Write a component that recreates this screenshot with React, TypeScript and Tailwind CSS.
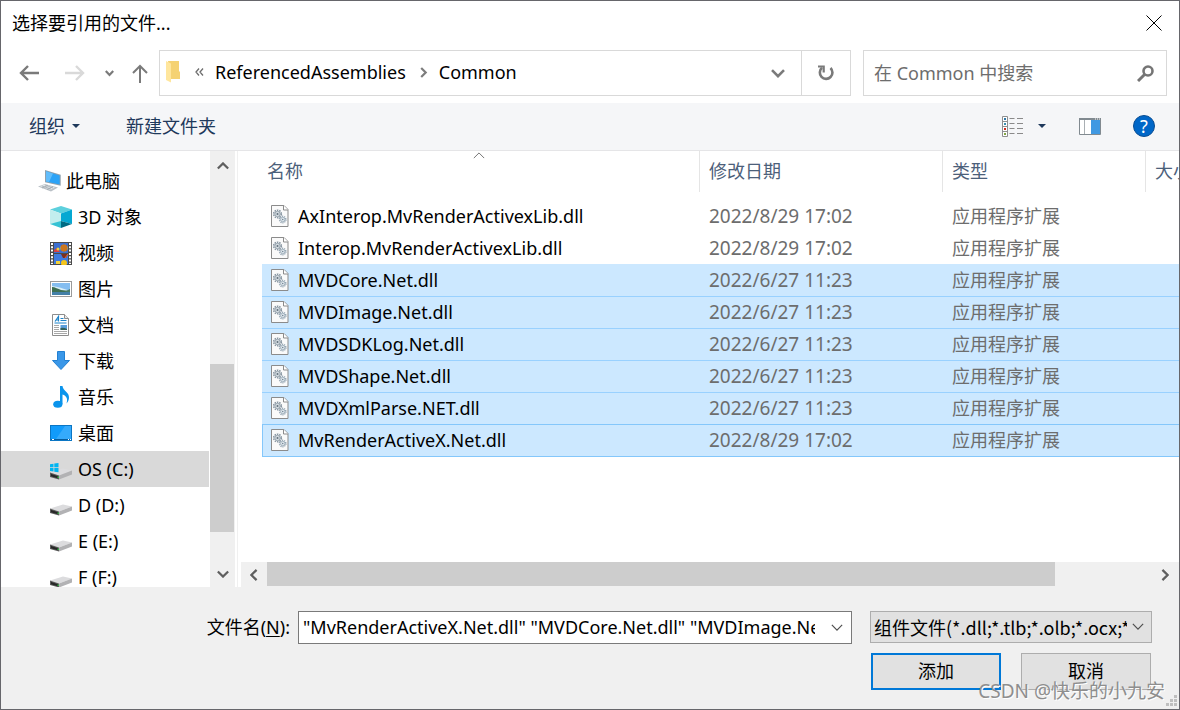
import type { ReactNode } from "react";

type IconProps = { className?: string };

function ComputerIcon() {
  return (
    <svg className="h-6 w-6" viewBox="0 0 24 24">
      <polygon points="0,17.5 7,15 20,18.5 13,22.5" fill="#b9c0c6" />
      <polygon points="2,17.3 7,15.6 17,18.4 12.5,20.8" fill="#e3e7ea" />
      <path d="M4 17l9 3M7 16l8 3M4 19l6-2.5M9 20.5l6-3" stroke="#9aa3aa" strokeWidth="0.7" />
      <polygon points="7,1 22.7,5.7 22.7,16.7 7,13.3" fill="#8fa0ad" />
      <polygon points="8,2.3 21.7,6.5 21.7,15.4 8,12.4" fill="#2ba3f7" />
      <polygon points="8,2.3 15,4.5 11,13 8,12.4" fill="#62bdfb" />
    </svg>
  );
}

function CubeIcon() {
  return (
    <svg className="h-[22px] w-[22px]" viewBox="0 0 22 22">
      <polygon points="0,3.5 11,0 22,3.5 11,7.5" fill="#5dd0dd" />
      <polygon points="0,3.5 11,7.5 11,16 0,18" fill="#c3eeee" />
      <polygon points="0,18 11,15 11,22" fill="#35c2d4" />
      <polygon points="22,3.5 11,7.5 11,15 22,18" fill="#05a8d2" />
      <polygon points="11,15 22,18 11,22" fill="#006c84" />
    </svg>
  );
}

function VideoIcon() {
  return (
    <svg className="h-[23px] w-[22px]" viewBox="0 0 22 23">
      <rect width="22" height="23" fill="#4b4b4b" />
      <rect x="4" y="1" width="14" height="10" fill="#3c6fd0" />
      <rect x="4" y="12" width="14" height="10" fill="#3f7be0" />
      <circle cx="14" cy="6" r="3.6" fill="#efb21d" />
      <path d="M14 2.4v7.2M12 3v6M16 3v6" stroke="#a63b22" />
      <path d="M4 8l3-2 3 4H4z" fill="#d83f45" />
      <circle cx="8" cy="7" r="1.5" fill="#f0d33a" />
      <path d="M11 12h7l-2 4h-3z" fill="#7b3020" />
      <circle cx="14" cy="21" r="3" fill="#f4c51c" />
      <path d="M6 19h4v3H6z" fill="#f4d43b" />
      <path d="M18 12l-3 4" stroke="#ee682c" />
      <path d="M2 1v21M20 1v21" stroke="#fff" strokeWidth="2" strokeDasharray="2 1.3" />
    </svg>
  );
}

function PictureIcon() {
  return (
    <svg className="h-[22px] w-[22px]" viewBox="0 0 22 22">
      <rect x="0.5" y="3.5" width="21" height="15" fill="#fff" stroke="#9b9b9b" />
      <rect x="2" y="5" width="18" height="12" fill="#84bdf0" />
      <path d="M2 8q8 1 18 5v2H2z" fill="#d8edf8" />
      <path d="M2 9c3 0 6 2 9 3l9 1v1H2z" fill="#3d6f52" />
      <path d="M2 14h18v3H2z" fill="#4380a8" />
      <path d="M20 11l-6 3h6z" fill="#477c69" />
    </svg>
  );
}

function DocumentIcon() {
  return (
    <svg className="h-[22px] w-[22px]" viewBox="0 0 22 22">
      <path d="M2.5 0.5h12l4 4v17h-16z" fill="#fff" stroke="#8d8d8d" />
      <path d="M14.5 0.5v4h4" fill="#e8e8e8" stroke="#8d8d8d" />
      <path d="M5 7.5L8.5 2.5v5M6 6h3" stroke="#1c83c9" strokeWidth="1.2" fill="none" />
      <path d="M10.5 4.5h3M10.5 6.5h6M4.5 9h12" stroke="#1c83c9" />
      <path d="M4 11.5h5M4 13.5h5M4 15.5h5M4 17.5h13M4 19.5h13" stroke="#a8a8a8" />
      <rect x="10.5" y="11" width="6.5" height="5" fill="#5a9edb" />
      <path d="M10.5 14q3-1 6.5 1v1h-6.5z" fill="#335f57" />
    </svg>
  );
}

function DownloadIcon() {
  return (
    <svg className="h-[22px] w-[22px]" viewBox="0 0 22 22">
      <path d="M7.5 1.5h7v9h5L11 19.5 2.5 10.5h5z" fill="#3a97e8" stroke="#2280d2" />
    </svg>
  );
}

function MusicIcon() {
  return (
    <svg className="h-[22px] w-[22px]" viewBox="0 0 22 22">
      <ellipse cx="7.8" cy="18.3" rx="4.6" ry="3.5" fill="#0a94ec" />
      <path d="M10 0h2.5c.5 5 7 6 6.5 12-.2 2-1 4-2.5 5.500 1.500-5 0-7.500-4-9V18H10z" fill="#0a94ec" />
    </svg>
  );
}

function DesktopIcon() {
  return (
    <svg className="h-[22px] w-[22px]" viewBox="0 0 22 22">
      <rect x="0.5" y="3.5" width="21" height="15" fill="#119bfb" stroke="#0b76c4" />
      <path d="M15 4h6v13H6z" fill="#35aafc" />
      <path d="M1 17.5h20" stroke="#075c9d" />
      <path d="M2 17.5h2M18 17.5h1M20 17.5h1" stroke="#fff" />
    </svg>
  );
}

function DriveIcon({ system = false }: { system?: boolean }) {
  return (
    <svg className="h-[22px] w-[22px]" viewBox="0 0 22 22">
      <polygon points="0,14.5 13,10.5 22,12.5 9,17.5" fill="#dcdcde" />
      <polygon points="9,17.5 22,12.5 22,16.5 9,21.5" fill="#b2b2b4" />
      <polygon points="0,14.5 9,17.5 9,21.5 0,19" fill="#5b5b5b" />
      <polygon points="1,16 8,18.3 8,20.3 1,18.3" fill="#262626" />
      <rect x="7.5" y="18.5" width="1.5" height="1.5" fill="#38b54a" />
      {system && (
        <path d="M0 6.200l3.500-.5v3.600H0zM4.300 5.600L8.500 5v4.300H4.300zM0 10h3.500v3.600L0 13.100zM4.300 10h4.200v4.200l-4.200-.5z" fill="#00b5f1" />
      )}
    </svg>
  );
}

function DllIcon() {
  return (
    <svg className="h-[22px] w-[18px] shrink-0" viewBox="0 0 18 22">
      <path d="M.5.5h12.500l4 4v17H.5z" fill="#fafafa" stroke="#8b8b8b" />
      <path d="M12.5.5v4.500h4.500" fill="#fff" stroke="#8b8b8b" />
      <circle cx="6.5" cy="9" r="3.8" fill="none" stroke="#8795a1" strokeWidth="1.6" strokeDasharray="1.5 0.9" />
      <circle cx="6.5" cy="9" r="2.7" fill="#d5dce1" stroke="#8795a1" strokeWidth="0.8" />
      <circle cx="6.5" cy="9" r="1" fill="#5f6e7a" />
      <circle cx="11.7" cy="14.5" r="3.2" fill="none" stroke="#93a4b2" strokeWidth="1.4" strokeDasharray="1.2 0.8" />
      <circle cx="11.7" cy="14.5" r="2.2" fill="#e2e9ee" stroke="#93a4b2" strokeWidth="0.8" />
      <circle cx="11.7" cy="14.5" r="0.8" fill="#758898" />
    </svg>
  );
}

function FolderIcon() {
  return (
    <svg className="h-[22px] w-[14px]" viewBox="0 0 14 22">
      <path d="M2 0h11v10.500h1V18H4z" fill="#f5d273" />
      <path d="M0 0l5 2.500V21.500L0 19z" fill="#ffe69d" />
    </svg>
  );
}

function Chevron({ className = "" }: IconProps) {
  return (
    <svg className={className} viewBox="0 0 14 8" fill="none" stroke="currentColor">
      <path d="M1 1l6 6 6-6" />
    </svg>
  );
}

function SmallTriangle() {
  return (
    <svg className="h-1 w-2" viewBox="0 0 8 4">
      <path d="M0 0h8L4 4z" fill="#1e395b" />
    </svg>
  );
}

function DetailsViewIcon() {
  return (
    <svg className="h-[21px] w-[21px]" viewBox="0 0 21 21">
      <path d="M.5.5h5v20h-5zM.5 5.500h5M.5 10.500h5M.5 15.500h5" fill="#fff" stroke="#8f8f8f" />
      <path d="M7.5 2.500h5M15 2.500h6M7.5 7.500h5M15 7.500h6M7.5 12.500h5M15 12.500h6M7.5 17.500h5M15 17.500h6" stroke="#8a8a8a" />
      <path d="M2 2h2v2H2z" fill="#2f79a8" />
      <path d="M2 7h2v2H2z" fill="#3b8fb0" />
      <path d="M2 12h2v2H2z" fill="#d32b1c" />
      <path d="M2 17h2v2H2z" fill="#83a644" />
    </svg>
  );
}

function PreviewPaneIcon() {
  return (
    <svg className="h-[17px] w-[22px]" viewBox="0 0 22 17">
      <path d="M.5.5h21v16H.5z" fill="#fff" stroke="#818a90" />
      <path d="M0 1h22" stroke="#818a90" strokeWidth="2" />
      <path d="M16 1h1M18 1h1M20 1h1" stroke="#fff" />
      <path d="M5.5 2v14" stroke="#a9afb3" />
      <path d="M12 2h9v14h-9z" fill="#4099e2" />
    </svg>
  );
}

const places: { label: string; icon: ReactNode; selected?: boolean }[] = [
  { label: "3D 对象", icon: <CubeIcon /> },
  { label: "视频", icon: <VideoIcon /> },
  { label: "图片", icon: <PictureIcon /> },
  { label: "文档", icon: <DocumentIcon /> },
  { label: "下载", icon: <DownloadIcon /> },
  { label: "音乐", icon: <MusicIcon /> },
  { label: "桌面", icon: <DesktopIcon /> },
  { label: "OS (C:)", icon: <DriveIcon system />, selected: true },
  { label: "D (D:)", icon: <DriveIcon /> },
  { label: "E (E:)", icon: <DriveIcon /> },
  { label: "F (F:)", icon: <DriveIcon /> },
];

const files = [
  { name: "AxInterop.MvRenderActivexLib.dll", date: "2022/8/29 17:02", state: "" },
  { name: "Interop.MvRenderActivexLib.dll", date: "2022/8/29 17:02", state: "" },
  { name: "MVDCore.Net.dll", date: "2022/6/27 11:23", state: "first" },
  { name: "MVDImage.Net.dll", date: "2022/6/27 11:23", state: "selected" },
  { name: "MVDSDKLog.Net.dll", date: "2022/6/27 11:23", state: "selected" },
  { name: "MVDShape.Net.dll", date: "2022/6/27 11:23", state: "selected" },
  { name: "MVDXmlParse.NET.dll", date: "2022/6/27 11:23", state: "selected" },
  { name: "MvRenderActiveX.Net.dll", date: "2022/8/29 17:02", state: "focused" },
];

const rowStyles: Record<string, string> = {
  "": "border-transparent",
  first: "border-[#cce8ff] bg-[#cce8ff]",
  selected: "border-[#99d1ff] bg-[#cce8ff]",
  focused: "border-b border-[#84c7fb] bg-[#cce8ff]",
};

function TitleBar() {
  return (
    <header className="flex h-[49px] shrink-0 items-start justify-between pl-[11px]">
      <h1 className="mt-2 text-[18px] leading-7">选择要引用的文件...</h1>
      <button className="flex h-[43px] w-[50px] items-center justify-center" aria-label="关闭">
        <svg className="h-4 w-4" viewBox="0 0 16 16" stroke="#000" fill="none">
          <path d="M.5.5l15 15M15.5.5l-15 15" />
        </svg>
      </button>
    </header>
  );
}

function NavBar() {
  return (
    <div className="flex h-[46px] shrink-0 items-stretch pr-3">
      <div className="flex w-[158px] shrink-0 items-center text-[#7a7a7a]">
        <button className="ml-[18px]" aria-label="后退">
          <svg className="h-4 w-5" viewBox="0 0 20 16" fill="none" stroke="currentColor" strokeWidth="2.4">
            <path d="M9 1L2 8l7 7M2 8h18" />
          </svg>
        </button>
        <button className="ml-[26px] text-[#d9d9d9]" aria-label="前进" disabled>
          <svg className="h-4 w-5" viewBox="0 0 20 16" fill="none" stroke="currentColor" strokeWidth="2.4">
            <path d="M11 1l7 7-7 7M18 8H0" />
          </svg>
        </button>
        <button className="ml-5" aria-label="最近浏览的位置">
          <svg className="h-[7px] w-[9px]" viewBox="0 0 9 7" fill="none" stroke="currentColor" strokeWidth="2.2">
            <path d="M.8 1l3.700 4L8.200 1" />
          </svg>
        </button>
        <button className="ml-[18px]" aria-label="上移">
          <svg className="h-[19px] w-4" viewBox="0 0 16 19" fill="none" stroke="currentColor" strokeWidth="2">
            <path d="M1 9l7-7 7 7M8 2v17" />
          </svg>
        </button>
      </div>

      <div className="flex min-w-0 flex-1 border border-[#d9d9d9]">
        <nav className="flex min-w-0 flex-1 items-center pb-[2px] pl-[6px]" aria-label="地址">
          <FolderIcon />
          <span className="ml-[15px] text-[#6d6d6d]">
            <svg className="h-2 w-[9px]" viewBox="0 0 9 8" fill="none" stroke="currentColor" strokeWidth="1.3">
              <path d="M4 .5L1 4l3 3.500M8 .5L5 4l3 3.500" />
            </svg>
          </span>
          <button className="ml-[11px] text-[18px] leading-6">ReferencedAssemblies</button>
          <svg className="ml-[14px] h-[11px] w-2" viewBox="0 0 8 11" fill="none" stroke="#7d7d7d" strokeWidth="2.2">
            <path d="M1.200 1l4.500 4.500L1.200 10" />
          </svg>
          <button className="ml-[11px] text-[18px] leading-6">Common</button>
        </nav>
        <button className="flex w-[46px] items-center justify-center text-[#7a7a7a]" aria-label="以前的位置">
          <svg className="h-[9px] w-[14px]" viewBox="0 0 14 9" fill="none" stroke="currentColor" strokeWidth="2.6">
            <path d="M1 1.200l6 6 6-6" />
          </svg>
        </button>
        <button className="flex w-[49px] items-center justify-center border-l border-[#d9d9d9] text-[#7a7a7a]" aria-label="刷新">
          <svg className="h-[18px] w-[18px]" viewBox="0 0 18 18" fill="none" stroke="currentColor" strokeWidth="2.6">
            <path d="M5 3.800A6.300 6.300 0 1 0 13.500 4" />
            <path d="M1 2.500h5.700v6" strokeWidth="2.2" />
          </svg>
        </button>
      </div>

      <div className="ml-3 flex w-[304px] items-center border border-[#d9d9d9] pr-3 pl-[10px]">
        <input
          className="min-w-0 flex-1 text-[18px] leading-6 outline-none placeholder:text-[#6d6d6d]"
          type="search"
          aria-label="搜索"
          placeholder="在 Common 中搜索"
        />
        <svg className="h-[17px] w-[17px]" viewBox="0 0 17 17" fill="none" stroke="#757575">
          <circle cx="11" cy="6" r="4.5" strokeWidth="2.6" />
          <path d="M7.800 9.200L1 16" strokeWidth="3" />
        </svg>
      </div>
    </div>
  );
}

function Toolbar() {
  return (
    <div className="mt-[7px] flex h-12 shrink-0 items-center border-b border-[#e5e5e7] bg-[#f5f6f8] pr-6 pb-px pl-7 text-[18px] text-[#1e395b]">
      <button className="flex items-center gap-[7px]">
        组织
        <SmallTriangle />
      </button>
      <button className="ml-[46px]">新建文件夹</button>
      <button className="ml-auto" aria-label="更改视图">
        <DetailsViewIcon />
      </button>
      <button className="ml-[15px] flex h-6 items-center" aria-label="更多视图">
        <SmallTriangle />
      </button>
      <button className="ml-[33px]" aria-label="预览窗格">
        <PreviewPaneIcon />
      </button>
      <button
        className="ml-8 flex h-[22px] w-[22px] items-center justify-center rounded-full border border-[#0a4d92] bg-[#0067c8] text-[18px] leading-5 text-white"
        aria-label="帮助"
      >
        ?
      </button>
    </div>
  );
}

function Sidebar() {
  return (
    <nav className="w-[209px] shrink-0 overflow-hidden pt-3 text-[18px]">
      <a className="flex h-9 items-center gap-1 pl-[37px]" href="#pc">
        <ComputerIcon />
        此电脑
      </a>
      {places.map((place) => (
        <a
          key={place.label}
          className={`flex h-9 items-center gap-[6px] pl-[49px] ${place.selected ? "mr-px bg-[#d9d9d9]" : ""}`}
          href="#place"
        >
          {place.icon}
          {place.label}
        </a>
      ))}
    </nav>
  );
}

function VerticalScrollbar() {
  return (
    <div className="flex w-[25px] shrink-0 flex-col bg-[#f0f0f0] text-[#5f5f5f]">
      <button className="flex h-[30px] items-center justify-center" aria-label="向上滚动">
        <Chevron className="h-2 w-3 rotate-180 stroke-[2.6]" />
      </button>
      <div className="flex-[183]" />
      <div className="mr-px flex-[168] bg-[#cdcdcd]" />
      <div className="flex-[29]" />
      <button className="flex h-[26px] items-center justify-center" aria-label="向下滚动">
        <Chevron className="h-2 w-3 stroke-[2.6]" />
      </button>
    </div>
  );
}

function FileTable() {
  return (
    <table className="w-full table-fixed border-separate border-spacing-0 text-[18px]">
      <colgroup>
        <col />
        <col className="w-[243px]" />
        <col className="w-[203px]" />
        <col className="w-[33px]" />
      </colgroup>
      <thead className="text-left text-[#4c607a]">
        <tr>
          <th className="relative p-0 pb-2 font-normal">
            <Chevron className="absolute top-px left-1/2 -ml-2 h-[7px] w-3 rotate-180 text-[#5f5f5f]" />
            <div className="flex h-[41px] items-center border-r border-[#e5e5e5] pl-[5px]">名称</div>
          </th>
          <th className="p-0 pb-2 font-normal">
            <div className="flex h-[41px] items-center border-r border-[#e5e5e5] pl-[9px]">修改日期</div>
          </th>
          <th className="p-0 pb-2 font-normal">
            <div className="flex h-[41px] items-center border-r border-[#e5e5e5] pl-[9px]">类型</div>
          </th>
          <th className="p-0 pb-2 font-normal">
            <div className="flex h-[41px] items-center overflow-hidden pl-[9px] whitespace-nowrap">大小</div>
          </th>
        </tr>
      </thead>
      <tbody>
        {files.map((file) => {
          const focused = file.state === "focused";
          const cell = `border-t p-0 align-top ${focused ? "h-[33px]" : "h-8"} ${rowStyles[file.state]}`;
          return (
            <tr key={file.name} className="leading-6">
              <td className={`${cell} ${focused ? "border-l" : ""}`}>
                <div className={`flex h-[30px] items-center gap-[9px] ${focused ? "pl-2" : "pl-[9px]"}`}>
                  <DllIcon />
                  {file.name}
                </div>
              </td>
              <td className={`${cell} text-[#6d6d6d]`}>
                <div className="flex h-[30px] items-center pl-[9px] text-[19px]">{file.date}</div>
              </td>
              <td className={`${cell} text-[#6d6d6d]`}>
                <div className="flex h-[30px] items-center pl-[9px]">应用程序扩展</div>
              </td>
              <td className={cell} />
            </tr>
          );
        })}
      </tbody>
    </table>
  );
}

function HorizontalScrollbar() {
  return (
    <div className="flex h-[25px] shrink-0 bg-[#f0f0f0] text-[#5f5f5f]">
      <button className="flex w-[26px] items-center justify-center" aria-label="向左滚动">
        <Chevron className="h-2 w-3 rotate-90 stroke-[2.6]" />
      </button>
      <div className="mb-px flex-[788] bg-[#cdcdcd]" />
      <div className="flex-[96]" />
      <button className="flex w-7 items-center justify-center" aria-label="向右滚动">
        <Chevron className="h-2 w-3 -rotate-90 stroke-[2.6]" />
      </button>
    </div>
  );
}

function Footer() {
  return (
    <footer className="relative h-[122px] shrink-0 bg-[#f0f0f0] pt-6 pr-[27px] text-[18px]">
      <div className="flex items-start">
        <label className="w-[297px] shrink-0 pr-2 text-right leading-8" htmlFor="filename">
          文件名(<span className="underline underline-offset-2">N</span>):
        </label>
        <div className="flex h-[33px] min-w-0 flex-1 items-center border border-[#7a7a7a] bg-white pl-1">
          <input
            id="filename"
            className="mr-2 min-w-0 flex-1 pb-px leading-6 outline-none"
            defaultValue={'"MvRenderActiveX.Net.dll" "MVDCore.Net.dll" "MVDImage.Net.dll" "MVDSDKLog.Net.dll"'}
          />
          <button className="flex h-full w-7 items-center justify-center text-[#4f4f4f]" aria-label="文件名列表">
            <Chevron className="h-[7px] w-3 stroke-[1.4]" />
          </button>
        </div>
        <div className="relative ml-[18px] w-[282px] shrink-0">
          <select
            className="h-8 w-full appearance-none overflow-hidden border border-[#adadad] bg-[#e1e1e1] pr-6 pl-[3px] font-['Noto_Sans_CJK_SC',sans-serif] leading-7"
            aria-label="文件类型"
          >
            <option>组件文件(*.dll;*.tlb;*.olb;*.ocx;*.exe;*.manifest)</option>
          </select>
          <Chevron className="pointer-events-none absolute top-3 right-2 h-[7px] w-3 stroke-[1.4] text-[#4f4f4f]" />
        </div>
      </div>
      <div className="mt-[9px] flex justify-end gap-5 pr-px">
        <button className="h-[37px] w-[130px] border-2 border-[#0078d7] bg-[#e1e1e1]">添加</button>
        <button className="h-[37px] w-[130px] border border-[#adadad] bg-[#e1e1e1]">取消</button>
      </div>
      <span className="pointer-events-none absolute right-[14px] bottom-1 text-[19px] leading-7 text-[#8e8e8e] text-shadow-[1px_1px_0_#ffffff]">
        CSDN @快乐的小九安
      </span>
      <svg className="absolute right-[2px] bottom-[2px] h-3 w-3" viewBox="0 0 12 12" fill="#bfbfbf">
        <path d="M9 0h3v3H9zM9 4h3v3H9zM5 4h3v3H5zM9 8h3v3H9zM5 8h3v3H5zM1 8h3v3H1z" />
      </svg>
    </footer>
  );
}

export default function App() {
  return (
    <main className="flex h-screen flex-col overflow-hidden border border-[#66666b] bg-white font-['Noto_Sans','Noto_Sans_CJK_SC',sans-serif] text-black">
      <TitleBar />
      <NavBar />
      <Toolbar />
      <div className="flex min-h-0 flex-1">
        <Sidebar />
        <VerticalScrollbar />
        <div className="ml-[2px] w-px shrink-0 bg-[#f0f0f0]" />
        <section className="ml-[3px] flex min-w-0 flex-1 flex-col">
          <div className="min-h-0 flex-1 overflow-hidden pl-[21px]">
            <FileTable />
          </div>
          <HorizontalScrollbar />
        </section>
      </div>
      <Footer />
    </main>
  );
}
